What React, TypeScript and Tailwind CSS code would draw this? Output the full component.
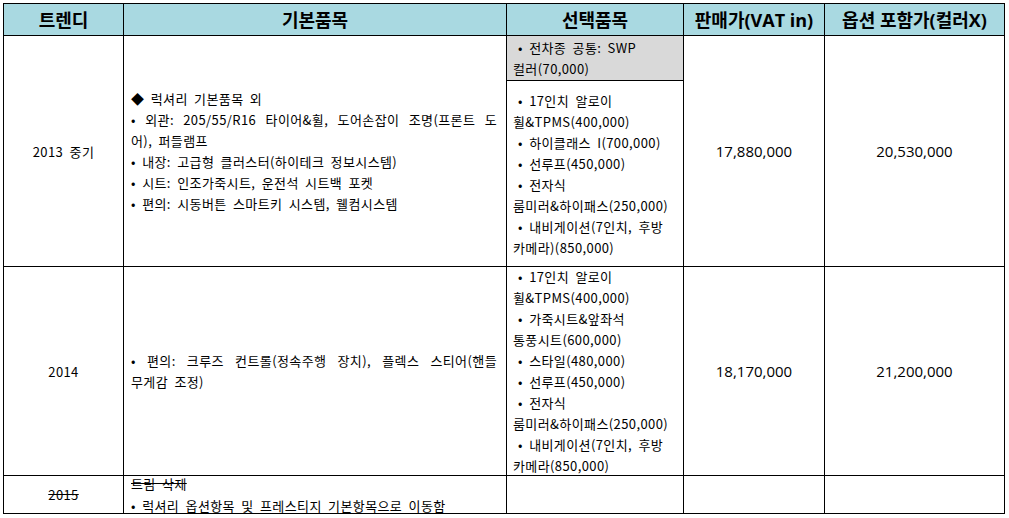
import React from "react";

const body =
  "font-['Noto_Sans_CJK_KR',sans-serif] text-[13px] leading-[21px] tracking-[0.4px] [word-spacing:3px] text-black";

function Line({ children, className = "" }: { children: React.ReactNode; className?: string }) {
  return <div className={`whitespace-nowrap ${className}`}>{children}</div>;
}

function JLine({ children }: { children: React.ReactNode }) {
  return <div className="whitespace-nowrap text-justify [text-align-last:justify]">{children}</div>;
}

const th =
  "border border-black bg-[#a9d9e1] text-center align-middle font-['Open_Sans','Noto_Sans_CJK_KR',sans-serif] font-bold text-[18px] leading-[22px] text-black p-0";
const td = "border border-black align-middle p-0";
const num = "text-center font-['Open_Sans','Noto_Sans_CJK_KR',sans-serif] text-[15px] text-black";

export default function App() {
  return (
    <div className="w-[1009px] h-[518px] bg-white">
      <table className="table-fixed border-collapse ml-[3px] mt-[3px] w-[1001px]">
        <colgroup>
          <col className="w-[120px]" />
          <col className="w-[383px]" />
          <col className="w-[177px]" />
          <col className="w-[141px]" />
          <col className="w-[180px]" />
        </colgroup>
        <thead>
          <tr className="h-[32px]">
            <th className={th}>트렌디</th>
            <th className={th}>기본품목</th>
            <th className={th}>선택품목</th>
            <th className={th}>판매가(VAT in)</th>
            <th className={th}>옵션 포함가(컬러X)</th>
          </tr>
        </thead>
        <tbody>
          <tr className="h-[45px]">
            <td rowSpan={2} className={`${td} ${body} text-center`}>
              2013 중기
            </td>
            <td rowSpan={2} className={`${td} ${body} pl-[7px] pr-[9px]`}>
              <Line>◆ 럭셔리 기본품목 외</Line>
              <JLine>• 외관: 205/55/R16 타이어&amp;휠, 도어손잡이 조명(프론트 도</JLine>
              <Line>어), 퍼들램프</Line>
              <Line>• 내장: 고급형 클러스터(하이테크 정보시스템)</Line>
              <Line>• 시트: 인조가죽시트, 운전석 시트백 포켓</Line>
              <Line>• 편의: 시동버튼 스마트키 시스템, 웰컴시스템</Line>
            </td>
            <td className={`${td} ${body} bg-[#d9d9d9] pl-[6px]`}>
              <Line className="pl-[5px]">• 전차종 공통: SWP</Line>
              <Line>컬러(70,000)</Line>
            </td>
            <td rowSpan={2} className={`${td} ${num}`}>
              17,880,000
            </td>
            <td rowSpan={2} className={`${td} ${num}`}>
              20,530,000
            </td>
          </tr>
          <tr className="h-[186px]">
            <td className={`${td} ${body} pl-[6px]`}>
              <Line className="pl-[5px]">• 17인치 알로이</Line>
              <Line>휠&amp;TPMS(400,000)</Line>
              <Line className="pl-[5px]">• 하이클래스 I(700,000)</Line>
              <Line className="pl-[5px]">• 선루프(450,000)</Line>
              <Line className="pl-[5px]">• 전자식</Line>
              <Line>룸미러&amp;하이패스(250,000)</Line>
              <Line className="pl-[5px]">• 내비게이션(7인치, 후방</Line>
              <Line>카메라)(850,000)</Line>
            </td>
          </tr>
          <tr className="h-[209px]">
            <td className={`${td} ${body} text-center`}>2014</td>
            <td className={`${td} ${body} pl-[7px] pr-[9px]`}>
              <JLine>• 편의: 크루즈 컨트롤(정속주행 장치), 플렉스 스티어(핸들</JLine>
              <Line>무게감 조정)</Line>
            </td>
            <td className={`${td} ${body} pl-[6px]`}>
              <div className="h-[206px] flex flex-col justify-center">
                <Line className="pl-[5px]">• 17인치 알로이</Line>
                <Line>휠&amp;TPMS(400,000)</Line>
                <Line className="pl-[5px]">• 가죽시트&amp;앞좌석</Line>
                <Line>통풍시트(600,000)</Line>
                <Line className="pl-[5px]">• 스타일(480,000)</Line>
                <Line className="pl-[5px]">• 선루프(450,000)</Line>
                <Line className="pl-[5px]">• 전자식</Line>
                <Line>룸미러&amp;하이패스(250,000)</Line>
                <Line className="pl-[5px]">• 내비게이션(7인치, 후방</Line>
                <Line>카메라(850,000)</Line>
              </div>
            </td>
            <td className={`${td} ${num}`}>18,170,000</td>
            <td className={`${td} ${num}`}>21,200,000</td>
          </tr>
          <tr className="h-[38px]">
            <td className={`${td} ${body} text-center`}>
              <span className="line-through">2015</span>
            </td>
            <td className={`${td} ${body} pl-[7px] pr-[9px]`}>
              <div className="h-[36px] flex flex-col justify-center leading-[22px]">
                <Line className="line-through">트림 삭제</Line>
                <Line>• 럭셔리 옵션항목 및 프레스티지 기본항목으로 이동함</Line>
              </div>
            </td>
            <td className={td}></td>
            <td className={td}></td>
            <td className={td}></td>
          </tr>
        </tbody>
      </table>
    </div>
  );
}
